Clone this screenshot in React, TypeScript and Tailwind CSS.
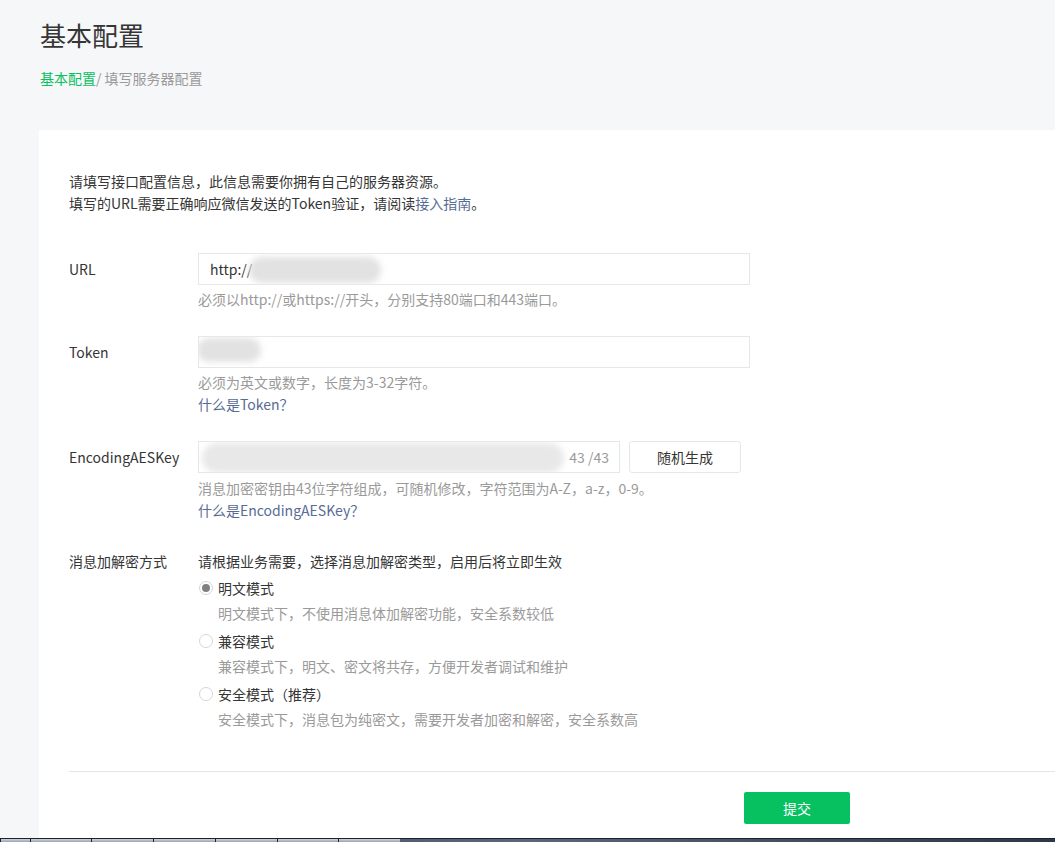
import React from 'react';

const font = { fontFamily: '"Noto Sans CJK SC", "Noto Sans", sans-serif' };

function Blur({ className }: { className: string }) {
  return <div className={`pointer-events-none absolute rounded-full bg-[#e2e2e2] blur-[3px] ${className}`} />;
}

function Radio({ checked, label }: { checked?: boolean; label: string }) {
  return (
    <label className="flex items-center h-[22px] text-[14px] text-[#353535]">
      <span className="w-[14px] h-[14px] ml-[1px] mr-[5px] rounded-full border border-[#d4d6d9] bg-white flex items-center justify-center">
        {checked && <span className="w-[8px] h-[8px] rounded-full bg-[#808080]" />}
      </span>
      {label}
    </label>
  );
}

export default function App() {
  return (
    <div style={font} className="w-[1055px] h-[842px] overflow-hidden flex flex-col bg-[#f6f7f9] [text-spacing-trim:space-all]">
      <div className="flex-1 min-h-0 flex flex-col pl-[39px]">
        <h1 className="pt-[16px] pl-px text-[26px] leading-[38px] text-[#353535]">基本配置</h1>
        <div className="mt-[13px] pl-px text-[14px] leading-[22px] text-[#9a9a9a]">
          <span className="text-[#07c160]">基本配置</span>/ 填写服务器配置
        </div>

        <div className="mt-[41px] flex-1 bg-white pl-[30px] pt-[40px] text-[14px] leading-[22px] text-[#353535]">
          <p>请填写接口配置信息，此信息需要你拥有自己的服务器资源。</p>
          <p>
            填写的URL需要正确响应微信发送的Token验证，请阅读<a className="text-[#576b95]">接入指南</a>。
          </p>

          {/* URL */}
          <div className="mt-[39px] flex">
            <div className="w-[129px] leading-[32px]">URL</div>
            <div>
              <div className="relative w-[552px] h-[32px] border border-[#e4e8eb] px-[11px] leading-[30px] overflow-hidden">
                http://
                <Blur className="left-[50px] top-[3px] w-[132px] h-[26px] rounded-[8px]" />
              </div>
              <p className="mt-[3px] text-[#9a9a9a]">必须以http://或https://开头，分别支持80端口和443端口。</p>
            </div>
          </div>

          {/* Token */}
          <div className="mt-[26px] flex">
            <div className="w-[129px] leading-[32px]">Token</div>
            <div>
              <div className="relative w-[552px] h-[32px] border border-[#e4e8eb] overflow-hidden">
                <Blur className="left-[-2px] top-[1px] w-[64px] h-[24px] rounded-[6px]" />
              </div>
              <p className="mt-[3px] text-[#9a9a9a]">必须为英文或数字，长度为3-32字符。</p>
              <p className="text-[#576b95]">什么是Token？</p>
            </div>
          </div>

          {/* EncodingAESKey */}
          <div className="mt-[26px] flex">
            <div className="w-[129px] leading-[32px]">EncodingAESKey</div>
            <div>
              <div className="flex items-center">
                <div className="relative w-[422px] h-[32px] border border-[#e4e8eb] pr-[10px] flex justify-end items-center leading-[30px] text-[#9a9a9a] overflow-hidden">
                  43 /43
                  <Blur className="left-[3px] top-[1px] w-[362px] h-[30px] rounded-[14px] bg-[#e8e8e8]" />
                </div>
                <button className="ml-[9px] w-[112px] h-[32px] rounded-[3px] border border-[#e4e8eb] bg-white text-[14px] text-[#353535]">
                  随机生成
                </button>
              </div>
              <p className="mt-[4px] text-[#9a9a9a]">消息加密密钥由43位字符组成，可随机修改，字符范围为A-Z，a-z，0-9。</p>
              <p className="text-[#576b95]">什么是EncodingAESKey？</p>
            </div>
          </div>

          {/* 消息加解密方式 */}
          <div className="mt-[29px] flex">
            <div className="w-[129px]">消息加解密方式</div>
            <div>
              <p>请根据业务需要，选择消息加解密类型，启用后将立即生效</p>
              <div className="mt-[5px]">
                <Radio checked label="明文模式" />
              </div>
              <p className="mt-[3px] pl-[20px] text-[#9a9a9a]">明文模式下，不使用消息体加解密功能，安全系数较低</p>
              <div className="mt-[6px]">
                <Radio label="兼容模式" />
              </div>
              <p className="mt-[3px] pl-[20px] text-[#9a9a9a]">兼容模式下，明文、密文将共存，方便开发者调试和维护</p>
              <div className="mt-[6px]">
                <Radio label="安全模式（推荐）" />
              </div>
              <p className="mt-[3px] pl-[20px] text-[#9a9a9a]">安全模式下，消息包为纯密文，需要开发者加密和解密，安全系数高</p>
            </div>
          </div>

          <div className="mt-[41px] border-t border-[#e4e5e7]" />
          <button className="mt-[20px] ml-[675px] w-[106px] h-[32px] rounded-[2px] bg-[#07c160] text-[14px] text-white">
            提交
          </button>
        </div>
      </div>

      {/* taskbar edge */}
      <div className="h-[4px] shrink-0 border-t border-[#1c2330] bg-gradient-to-r from-[#3a4658] via-[#59677a] to-[#2d3848] flex">
        {[30, 61, 62, 62, 62, 61, 62].map((w, i) => (
          <div key={i} style={{ width: w }} className="h-full border-l border-[#1c2330] bg-gradient-to-b from-[#d0d5dc] to-[#9aa2ad]" />
        ))}
      </div>
    </div>
  );
}
